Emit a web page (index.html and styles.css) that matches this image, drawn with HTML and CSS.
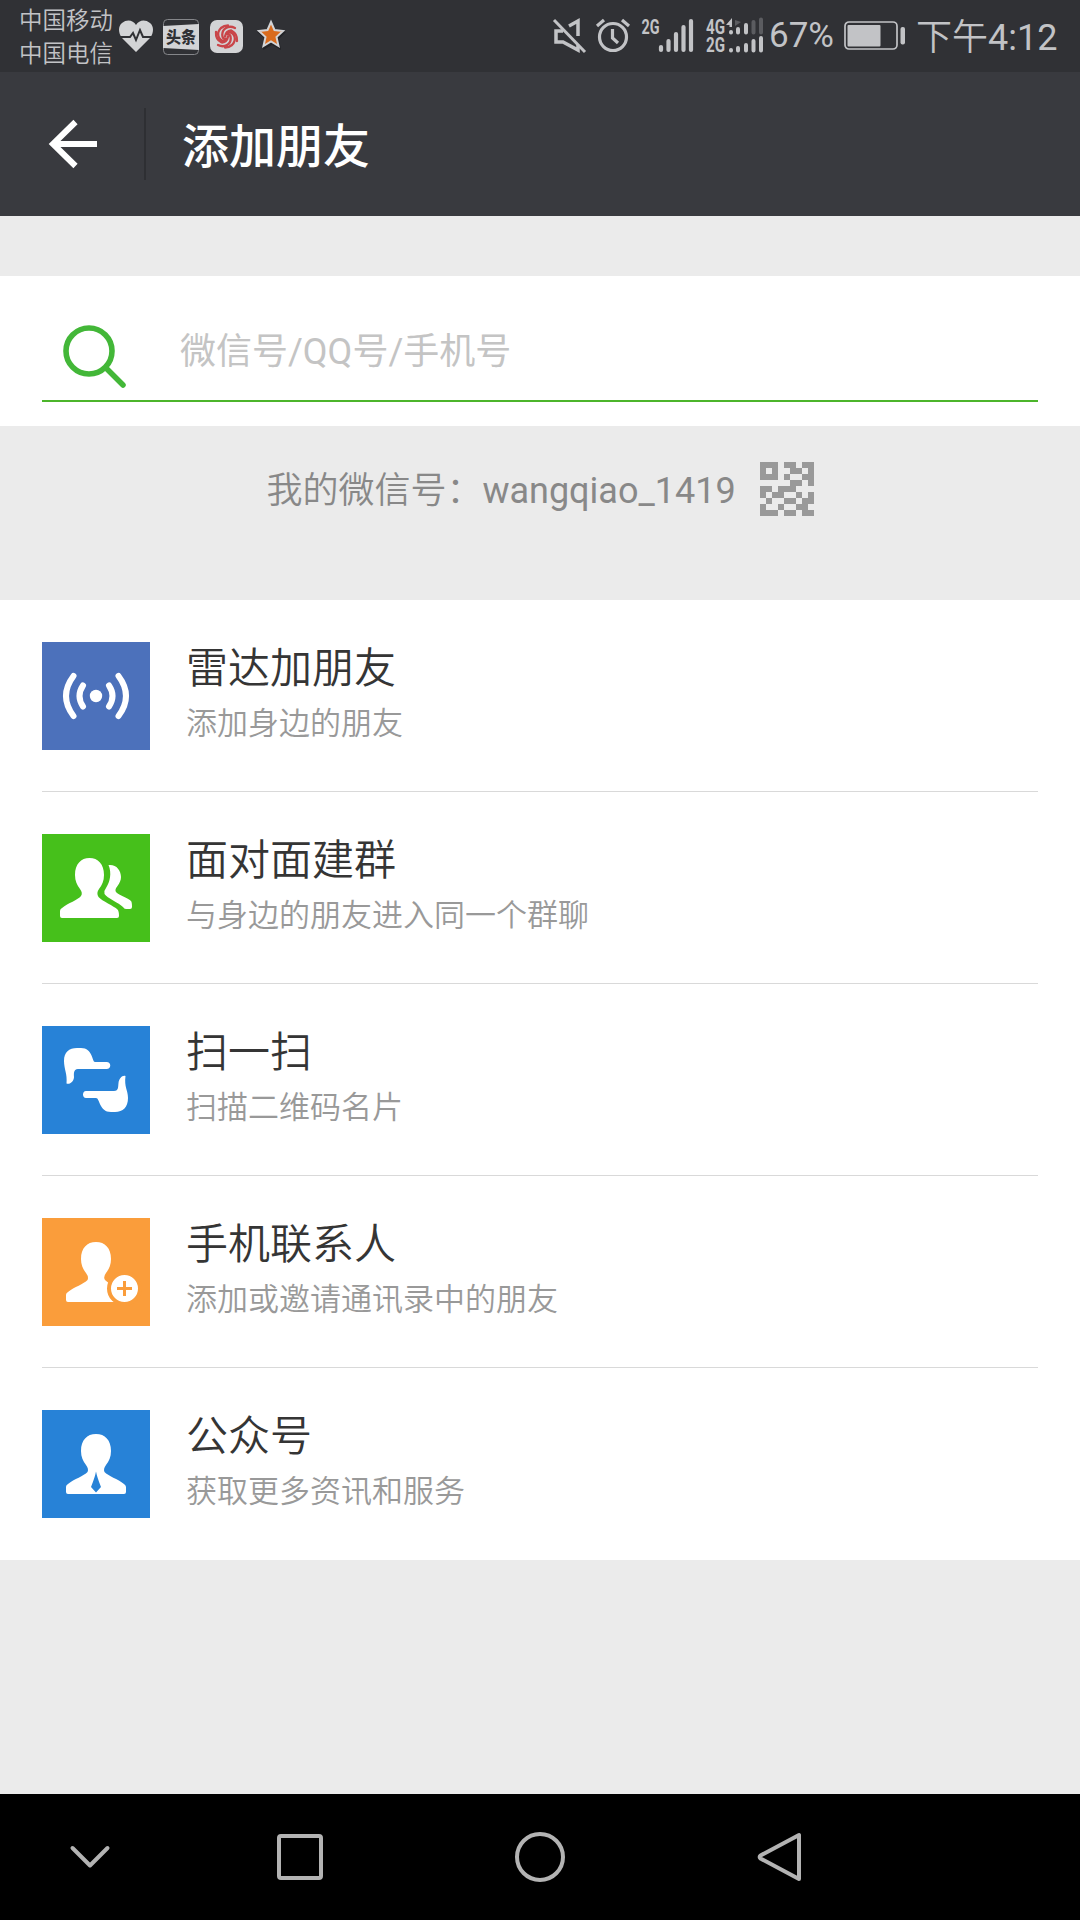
FILE: index.html
```html
<!DOCTYPE html>
<html lang="zh-CN">
<head>
    <meta charset="UTF-8">
    <meta name="viewport" content="width=device-width, initial-scale=1.0">
    <title>添加朋友</title>
    <link rel="stylesheet" href="styles.css">
</head>
<body>

    <div class="status-bar">
        <div class="carriers">
            <span>中国移动</span>
            <span>中国电信</span>
        </div>
        <svg class="st-heart" width="34" height="32" viewBox="0 0 34 32">
            <path fill="#d3d4d6" d="M17 32L3 18C-1 13-1 6 3 3C8-1 14 0 17 5C20 0 26-1 31 3C35 6 35 13 31 18Z"/>
            <path fill="none" stroke="#303135" stroke-width="2" d="M0 17H11L14 13L17 20L21 10L24 17H34"/>
        </svg>
        <svg class="st-news" width="36" height="36" viewBox="0 0 36 36">
            <rect x="0.5" y="0.5" width="35" height="35" rx="4" fill="#303135" stroke="#85868a"/>
            <path fill="#d3d4d6" d="M0 7L36 5V31L0 29Z"/>
            <text class="news-label" x="3" y="24" textLength="30" lengthAdjust="spacingAndGlyphs">头条</text>
        </svg>
        <svg class="st-swirl" width="33" height="33" viewBox="0 0 33 33">
            <rect width="33" height="33" rx="7" fill="#d3d4d6"/>
            <g fill="none" stroke="#c94549" stroke-width="2.300" stroke-linecap="round">
                <path d="M16 19C11 19 11 11 16 8Q20 5.500 25 8"/>
                <path d="M17 14C22 14 22 22 17 25Q13 27.500 8 25"/>
                <path d="M14 21C8 20 6 13 11 8Q14 5.500 18 5.500"/>
                <path d="M19 12C25 13 27 20 22 25Q19 27.500 15 27.500"/>
                <path d="M11 22Q5.500 19 6 12"/>
                <path d="M22 11Q27.500 14 27 21"/>
                <path d="M15 16.500Q16 11 21 10.500M18 16.500Q17 22 12 22.500"/>
            </g>
        </svg>
        <svg class="st-star" width="30" height="32" viewBox="0 0 30 32">
            <path fill="#222327" d="M16 3L20 12L30 13L23 20L25 31L16 26L7 31L9 20L1 13L12 12Z"/>
            <path fill="#d96b1d" stroke="#d3d4d6" stroke-width="2" d="M15 3L18.500 11L27 12L20.500 18L22.500 27L15 22.500L7.500 27L9.500 18L3 12L11.500 11Z"/>
        </svg>

        <svg class="st-mute" width="34" height="34" viewBox="0 0 34 34" fill="none" stroke="#c2c3c6" stroke-width="3.500">
            <path d="M16 7L25 2V17M10 12H3V23H10L25 31V26"/>
            <path d="M1 1L32 33" stroke-width="3"/>
        </svg>
        <svg class="st-alarm" width="34" height="34" viewBox="0 0 34 34" fill="none" stroke="#c2c3c6" stroke-width="3.200">
            <circle cx="17" cy="19" r="13.500"/>
            <path d="M16.500 11V20L22 25M1 8L8 2M33 8L26 2"/>
        </svg>
        <svg class="st-signal" width="54" height="36" viewBox="0 0 54 36">
            <text class="net-label" x="0.500" y="16" textLength="18" lengthAdjust="spacingAndGlyphs">2G</text>
            <path stroke="#c2c3c6" stroke-width="4.200" stroke-linecap="round" d="M20 29V32M27.500 23V32M35 16V32M42.500 9V32M50 3V32"/>
        </svg>
        <svg class="st-signal2" width="58" height="36" viewBox="0 0 58 36">
            <text class="net-label" x="0" y="16" textLength="19" lengthAdjust="spacingAndGlyphs">4G</text>
            <text class="net-label" x="0" y="34" textLength="19" lengthAdjust="spacingAndGlyphs">2G</text>
            <g stroke="#c2c3c6" stroke-width="4" stroke-linecap="round">
                <path d="M25 14V14.500M32 11V14.500M40 7V14.500"/>
                <path d="M25 32V32.500M32 30V32.500M40 27V32.500M47.500 23V32.500M55 20V32.500"/>
                <path stroke="#5b5c60" d="M47.500 4V14.500M55 1.500V14.500"/>
            </g>
            <path fill="#c2c3c6" d="M20 7L26 0V9H23.500V7Z"/>
            <path fill="#5b5c60" d="M29 2L35 4L29 8Z"/>
        </svg>
        <span class="percent">67%</span>
        <svg class="st-battery" width="62" height="30" viewBox="0 0 62 30">
            <rect x="1" y="1" width="52" height="27" rx="4" fill="none" stroke="#c2c3c6" stroke-width="1.700"/>
            <rect x="3.500" y="4" width="33" height="21.500" rx="1" fill="#c2c3c6"/>
            <rect x="56.500" y="6" width="4.500" height="17.500" rx="2" fill="#c2c3c6"/>
        </svg>
        <span class="clock">下午<b>4:12</b></span>
    </div>

    <div class="header">
        <svg class="back" width="50" height="50" viewBox="0 0 50 50" fill="none" stroke="#fff" stroke-width="6">
            <path d="M27.500 3L5 25L27.500 47M5 25H49"/>
        </svg>
        <div class="header-line"></div>
        <h1>添加朋友</h1>
    </div>

    <div class="search">
        <div class="search-box">
            <svg width="66" height="66" viewBox="0 0 66 66" fill="none" stroke="#43b738" stroke-linecap="round">
                <circle cx="26" cy="27" r="23" stroke-width="5.600"/>
                <path stroke-width="5.500" d="M43 44L60 61"/>
            </svg>
            <input type="text" id="searchId" placeholder="微信号/QQ号/手机号">
        </div>
    </div>

    <div class="my-id">
        <div class="id-text">我的微信号：<span>wangqiao_1419</span></div>
        <svg width="54" height="54" viewBox="0 0 9 9" shape-rendering="crispEdges">
            <path fill="#999" d="M0 0h3v1H0zM4 0h2v1H4zM7 0h2v1H7zM0 1h1v1H0zM2 1h1v1H2zM5 1h2v1H5zM8 1h1v1H8zM0 2h3v1H0zM4 2h1v1H4zM7 2h2v1H7zM5 3h2v1H5zM8 3h1v1H8zM0 4h2v1H0zM3 4h3v1H3zM0 5h1v1H0zM2 5h2v1H2zM6 5h1v1H6zM8 5h1v1H8zM1 6h1v1H1zM4 6h2v1H4zM7 6h2v1H7zM0 7h1v1H0zM3 7h1v1H3zM6 7h2v1H6zM0 8h3v1H0zM4 8h2v1H4zM7 8h2v1H7z"/>
        </svg>
    </div>

    <div class="list">
        <div class="item">
            <svg class="icon indigo" viewBox="0 0 108 108">
                <circle cx="54" cy="54" r="6.200" fill="#fff"/>
                <path fill="none" stroke="#fff" stroke-width="6" stroke-linecap="round" d="M41 43.500Q34 54 41 64.500M67 43.500Q74 54 67 64.500M31.500 34Q16.500 54 31.500 74M76.500 34Q91.500 54 76.500 74"/>
            </svg>
            <div class="text">
                <h2>雷达加朋友</h2>
                <p>添加身边的朋友</p>
            </div>
        </div>
        <div class="item">
            <svg class="icon green" viewBox="0 0 108 108" fill="#fff">
                <path d="M47.500 24C56 24 62 30 62 41C62 47 60 51 57 55Q54 59 56.500 63C60 67 72 72 75.500 75.500Q77 77 77 82Q77 84 75 84H20Q18 84 18 82V77Q18 75 20 74C26 69 36 66 39 62Q41 59 38 55C35 51 33 47 33 41C33 30 39 24 47.500 24Z"/>
                <path d="M66.500 31C74 30 79 36 79 43C79 50 73 53 73.500 57C74 60 86 64 89 67Q90 68 90 73Q90 75 88 75H84Q82 75 81 73C77 69 65 64 62.500 60Q61.500 57 64 54C68 48 70 39 66.500 31Z"/>
            </svg>
            <div class="text">
                <h2>面对面建群</h2>
                <p>与身边的朋友进入同一个群聊</p>
            </div>
        </div>
        <div class="item">
            <svg class="icon blue" viewBox="0 0 108 108" fill="#fff">
                <path d="M24.500 57.500C25.500 48 22 43 22 35C22 26 27 22 35 22H39C51 22 50 36 53 36H64.500C69.500 36 69.500 43 64.500 43H36C31 43 32 49 32 51C32 55 28 59 24.500 57.500Z"/>
                <path d="M83.500 50C82 61 86 64 86 72C86 81 81 86 73 86H69C57 86 58 72 54 72H44C40 72 40 65 44 65H72C77 65 76 60 76.500 57C77 53 80 49 83.500 50Z"/>
            </svg>
            <div class="text">
                <h2>扫一扫</h2>
                <p>扫描二维码名片</p>
            </div>
        </div>
        <div class="item">
            <svg class="icon orange" viewBox="0 0 108 108">
                <path fill="#fff" d="M54 24C63 24 69 30 69 41C69 47 67 51 64 55Q61 59 63 62C68 67 78 71 83 75Q84 76 84 84H26Q24 84 24 82V77Q24 75 26 74C32 69 42 66 45.500 62Q47 59 44 55C41 51 39 47 39 41C39 30 45 24 54 24Z"/>
                <circle cx="82.500" cy="70.500" r="15.500" fill="#fff" stroke="#fa9d3b" stroke-width="4"/>
                <path fill="none" stroke="#fa9d3b" stroke-width="3" d="M75 70.500H90M82.500 63V78"/>
            </svg>
            <div class="text">
                <h2>手机联系人</h2>
                <p>添加或邀请通讯录中的朋友</p>
            </div>
        </div>
        <div class="item">
            <svg class="icon blue" viewBox="0 0 108 108">
                <path fill="#fff" d="M54 24C63 24 69 30 69 41C69 47 67 51 64 55Q61 59 62.500 62C66 66 76 69 82 74Q84 75.500 84 77V82Q84 84 82 84H26Q24 84 24 82V77Q24 75 26 74C32 69 42 66 45.500 62Q47 59 44 55C41 51 39 47 39 41C39 30 45 24 54 24Z"/>
                <path class="tie" d="M54 61.500Q55 67 59 77L54 82.500L49 77Q53 67 54 61.500Z"/>
            </svg>
            <div class="text">
                <h2>公众号</h2>
                <p>获取更多资讯和服务</p>
            </div>
        </div>
    </div>

    <div class="nav-bar">
        <svg width="60" height="60" viewBox="0 0 60 60"><path d="M12.500 21L30 38.500L47.500 21"/></svg>
        <svg width="60" height="60" viewBox="0 0 60 60"><rect x="9" y="9" width="42" height="42" rx="2"/></svg>
        <svg width="60" height="60" viewBox="0 0 60 60"><circle cx="30" cy="30" r="23"/></svg>
        <svg width="60" height="60" viewBox="0 0 60 60"><path d="M49 8V52L10.500 31.500Q9 30 10.500 28.500Z"/></svg>
    </div>

</body>
</html>
```

FILE: styles.css
```css
* { box-sizing: border-box; }
body { margin: 0; min-height: 1920px; display: flex; flex-direction: column; background-color: #ebebeb; font-family: Roboto, "Noto Sans CJK SC", sans-serif; }
h1, h2, p { margin: 0; font-weight: normal; }
svg { display: block; flex-shrink: 0; overflow: visible; }

/* status bar */
.status-bar { height: 72px; padding: 0 0 0 19px; display: flex; align-items: flex-start; background-color: #303135; color: #c2c3c6; }
.carriers { width: 100px; padding-top: 5px; display: flex; flex-direction: column; font-size: 23.5px; line-height: 33px; font-weight: 350; white-space: nowrap; }
.st-heart { margin-top: 20px; }
.st-news { margin: 19px 0 0 10px; }
.st-swirl { margin: 20px 0 0 11px; }
.st-star { margin: 19px 0 0 13px; }
.st-mute { margin: 19px 0 0 267px; }
.st-alarm { margin: 18px 0 0 9px; }
.st-signal { margin: 18px 0 0 11px; }
.st-signal2 { margin: 18px 0 0 11px; }
.news-label { font: 900 16px "Noto Sans CJK SC", sans-serif; fill: #303135; }
.net-label { font: bold 21px Roboto, sans-serif; fill: #c2c3c6; }
.percent { width: 75px; margin-left: 5px; font-size: 35px; line-height: 71px; }
.st-battery { margin-top: 21px; }
.clock { margin-left: 10px; font-size: 36px; line-height: 76px; font-weight: 350; white-space: nowrap; }
.clock b { font-weight: 400; }

/* header */
.header { height: 144px; padding-left: 48px; display: flex; align-items: center; background-color: #393a3f; }
.header-line { width: 2px; height: 72px; margin: 0 36px 0 46px; background-color: #2e2f33; }
.header h1 { padding-top: 5px; font-size: 47px; line-height: 60px; color: #fff; font-weight: 500; }

/* search */
.search { height: 150px; margin-top: 60px; padding: 0 42px 24px; background-color: #fff; }
.search-box { height: 126px; padding: 48px 0 0 21px; display: flex; align-items: flex-start; border-bottom: 2px solid #4cb52b; }
.search-box input { flex: 1; height: 56px; padding: 0; margin-left: 51px; border: none; outline: none; background: none; font-family: inherit; font-size: 36px; color: #353535; }
.search-box input::placeholder { color: #c4c4c4; }

.my-id { height: 174px; padding-top: 36px; display: flex; justify-content: center; gap: 24px; font-size: 36px; line-height: 54px; color: #888; }
.id-text { padding-top: 2px; font-weight: 350; }
.id-text span { font-weight: 400; }

/* list */
.list { padding: 0 42px; background-color: #fff; }
.item { height: 192px; display: flex; align-items: center; border-bottom: 1px solid #d9d9d9; }
.item:last-child { border-bottom: none; }
.icon { width: 108px; height: 108px; margin-right: 36px; }
.indigo { background-color: #4c71bb; }
.green { background-color: #46c01b; }
.blue { background-color: #2782d7; }
.orange { background-color: #fa9d3b; }
.tie { fill: #2782d7; }
.text h2 { font-size: 42px; line-height: 56px; color: #353535; font-weight: 350; }
.text p { font-size: 31px; line-height: 54px; color: #999; font-weight: 350; }

/* android navigation keys */
.nav-bar { height: 126px; margin-top: auto; display: grid; grid-template-columns: 180px 240px 240px 240px; justify-items: center; align-items: center; background-color: #000; }
.nav-bar svg { fill: none; stroke: #b3b3b3; stroke-width: 4; stroke-linecap: round; stroke-linejoin: round; }
```
